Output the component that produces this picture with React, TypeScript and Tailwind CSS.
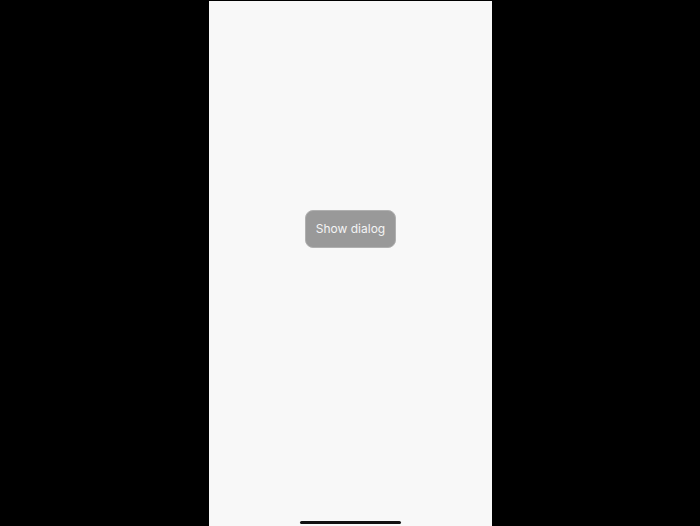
export default function App() {
  return (
    <div className="h-[526px] w-[700px] bg-black flex justify-center pt-px" style={{ fontFamily: '"Inter", "Liberation Sans", sans-serif' }}>
      <div className="ml-[1px] w-[283px] h-[525px] bg-[#f8f8f8] flex flex-col items-center">
        <div className="flex-1 flex items-center justify-center pb-[64px]">
          <button className="w-[91px] h-[38px] rounded-[8px] bg-[#999999] border border-[#b0b0b0] text-[#f4f4f4] text-[12px]">
            Show dialog
          </button>
        </div>
        <div className="w-[101px] h-[3px] rounded-full bg-[#111] mb-[2px]" />
      </div>
    </div>
  );
}
